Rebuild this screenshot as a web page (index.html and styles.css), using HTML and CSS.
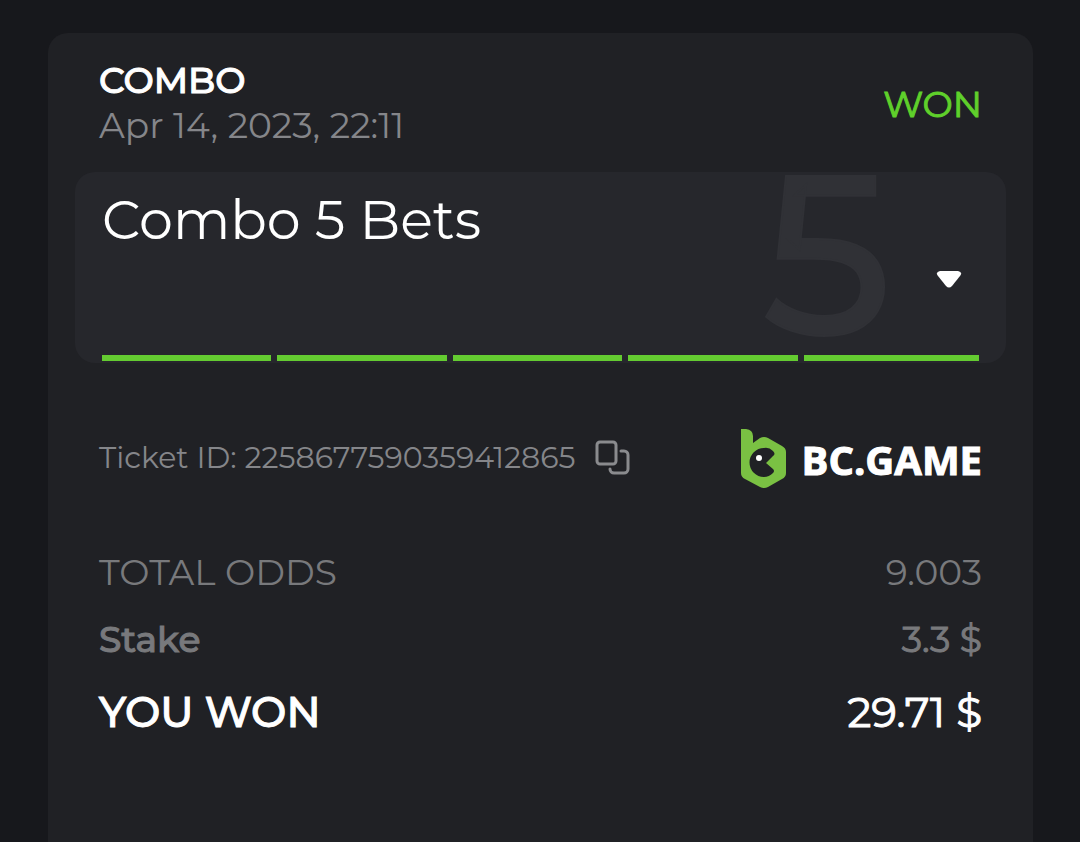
FILE: index.html
```html
<!DOCTYPE html>
<html lang="en">
<head>
    <meta charset="UTF-8">
    <meta name="viewport" content="width=device-width, initial-scale=1.0">
    <title>Bet Ticket</title>
    <link rel="stylesheet" href="styles.css">
</head>
<body>

    <main class="ticket">
        <header class="ticket-header">
            <div>
                <h1 class="ticket-type">COMBO</h1>
                <time class="ticket-date" datetime="2023-04-14T22:11">Apr 14, 2023, 22:11</time>
            </div>
            <span class="ticket-status">WON</span>
        </header>

        <section class="combo">
            <div class="combo-body">
                <h2 class="combo-title">Combo 5 Bets</h2>
                <span class="combo-count">5</span>
                <button type="button" class="combo-toggle" aria-label="Show bets">
                    <svg width="26" height="18" viewBox="0 0 26 18">
                        <path d="M4 1h18q5 1 2 5l-8 10q-3 3-6 0L2 6q-3-4 2-5z" fill="#fff"/>
                    </svg>
                </button>
            </div>
            <div class="combo-legs">
                <span class="leg"></span>
                <span class="leg"></span>
                <span class="leg"></span>
                <span class="leg"></span>
                <span class="leg"></span>
            </div>
        </section>

        <section class="ticket-info">
            <div class="ticket-id">
                <span>Ticket ID: 2258677590359412865</span>
                <button type="button" class="copy-button" aria-label="Copy ticket ID">
                    <svg width="36" height="36" viewBox="0 0 36 36" fill="none" stroke="#8a8b8e" stroke-width="3" stroke-linecap="round" stroke-linejoin="round">
                        <rect x="3" y="2" width="19" height="22" rx="3"/>
                        <path d="M27 11h3a4 4 0 0 1 4 4v14a4 4 0 0 1-4 4H20a4 4 0 0 1-4-4"/>
                    </svg>
                </button>
            </div>
            <a href="#" class="brand">
                <svg width="46" height="60" viewBox="0 0 46 60">
                    <path d="M1 0h5q7 1 7 7v7l7-5q4-2 8 0l14 8q4 2 4 6v21q0 4-4 6l-14 8q-4 2-8 0L5 50q-4-2-4-6z" fill="#7ac143"/>
                    <path d="M33 22Q29 18 24 19a14 14 0 0 0 0 29q5 0 9-4 2-2 0-4l-7-6 7-7q3-2 0-5z" fill="#202125"/>
                    <circle cx="19" cy="29" r="3" fill="#fff"/>
                </svg>
                <span class="brand-name">BC.GAME</span>
            </a>
        </section>

        <dl class="totals">
            <div class="total-row odds">
                <dt>TOTAL ODDS</dt>
                <dd>9.003</dd>
            </div>
            <div class="total-row stake">
                <dt>Stake</dt>
                <dd>3.3 $</dd>
            </div>
            <div class="total-row payout">
                <dt>YOU WON</dt>
                <dd>29.71 $</dd>
            </div>
        </dl>
    </main>

</body>
</html>
```

FILE: styles.css
```css
/* Body Styling */
body {
    margin: 0;
    min-height: 100vh;
    box-sizing: border-box;
    padding: 33px 47px 0 48px;
    display: flex;
    background-color: #17181c;
    color: #fff;
    font-family: Montserrat, Inter, sans-serif;
}

h1, h2, dl, dd {
    margin: 0;
}

button {
    display: flex;
    padding: 0;
    border: none;
    background: none;
    cursor: pointer;
}

/* Ticket Card */
.ticket {
    flex: 1;
    padding: 24px 27px;
    background-color: #202125;
    border-radius: 20px 20px 0 0;
}

.ticket-header {
    display: flex;
    justify-content: space-between;
    align-items: center;
    padding: 0 24px;
    margin-bottom: 25px;
}

.ticket-type {
    font-size: 36px;
    font-weight: 500;
    line-height: 46px;
    -webkit-text-stroke: 1px;
}

.ticket-date {
    display: block;
    font-size: 36px;
    font-weight: 400;
    line-height: 44px;
    color: #85868a;
}

.ticket-status {
    padding-top: 4px;
    font-size: 36px;
    font-weight: 400;
    color: #5fd02b;
    -webkit-text-stroke: 1px;
}

/* Combo Panel */
.combo {
    padding: 0 27px 2px;
    background-color: #26272c;
    border-radius: 20px;
}

.combo-body {
    display: flex;
    height: 183px;
}

.combo-title {
    flex: 1;
    padding-top: 16px;
    font-size: 54px;
    font-weight: 400;
    line-height: 64px;
}

.combo-count {
    margin-right: 44px;
    font-size: 226px;
    font-weight: 500;
    line-height: 162px;
    color: #303136;
    -webkit-text-stroke: 2px;
}

.combo-toggle {
    align-self: center;
    margin: 30px 17px 0 0;
}

.combo-legs {
    display: grid;
    grid-template-columns: repeat(5, 1fr);
}

.leg {
    height: 6px;
    margin-right: 6px;
    background-color: #64cb31;
}

.leg:last-child {
    margin-right: 0;
}

/* Ticket ID and Brand */
.ticket-info {
    display: flex;
    justify-content: space-between;
    align-items: flex-end;
    padding: 65px 24px 0;
}

.ticket-id {
    display: flex;
    align-items: center;
    gap: 18px;
    font-size: 30px;
    font-weight: 400;
    line-height: 60px;
    padding-bottom: 2px;
    color: #85868a;
}

.brand {
    display: flex;
    align-items: center;
    gap: 16px;
    color: #fff;
    font-family: "Open Sans", sans-serif;
    font-size: 40px;
    font-weight: 700;
    line-height: 60px;
    text-decoration: none;
}

.brand-name {
    padding-top: 2px;
    -webkit-text-stroke: 1px;
}

/* Totals */
.totals {
    padding: 53px 24px 0;
}

.total-row {
    display: flex;
    justify-content: space-between;
    color: #78797c;
}

.odds {
    font-size: 36px;
    font-weight: 400;
    line-height: 58px;
}

.stake {
    font-size: 36px;
    font-weight: 400;
    line-height: 76px;
    -webkit-text-stroke: 1px;
}

.payout {
    font-size: 42px;
    font-weight: 400;
    line-height: 70px;
    color: #fff;
    -webkit-text-stroke: 1px;
}

.stake dt, .payout dt {
    font-weight: 500;
}
```
